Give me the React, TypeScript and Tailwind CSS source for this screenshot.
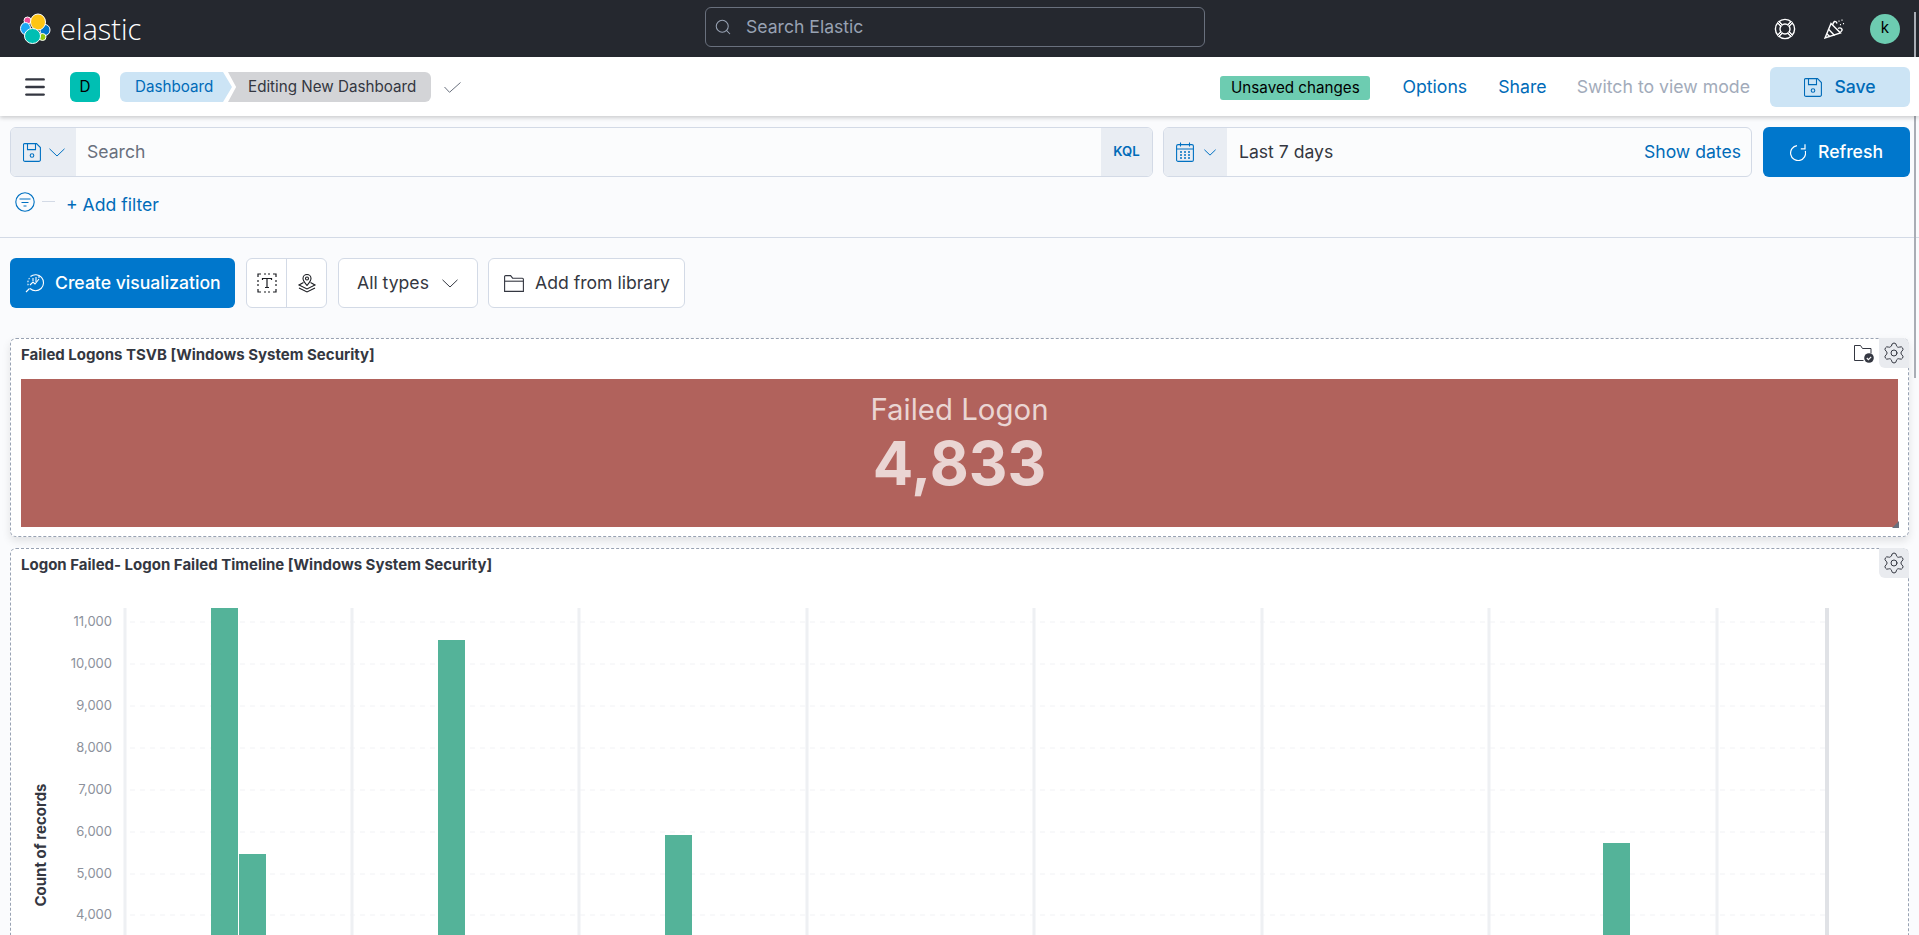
import React from 'react';
import { Menu, Search, Settings } from 'lucide-react';

const yTicks = [
  { label: '11,000', y: 622 },
  { label: '10,000', y: 664 },
  { label: '9,000', y: 706 },
  { label: '8,000', y: 748 },
  { label: '7,000', y: 790 },
  { label: '6,000', y: 832 },
  { label: '5,000', y: 874 },
  { label: '4,000', y: 915 },
];

const gridX = [352, 579, 807, 1034, 1262, 1489, 1717];

const bars = [
  { x: 211, w: 27, top: 608 },
  { x: 239, w: 27, top: 854 },
  { x: 438, w: 27, top: 640 },
  { x: 665, w: 27, top: 835 },
  { x: 1603, w: 27, top: 843 },
];

function ElasticLogo() {
  return (
    <svg width="32" height="32" viewBox="19 11 32 32" className="shrink-0">
      <g stroke="#fff" strokeWidth="1">
        <circle cx="27.5" cy="18.5" r="3.5" fill="#f04e98" />
        <ellipse cx="25.5" cy="26.5" rx="5" ry="6" fill="#1ba9f5" />
        <ellipse cx="45" cy="28" rx="5" ry="5.5" fill="#0077cc" />
        <circle cx="42.5" cy="35" r="3.5" fill="#93c90e" />
        <ellipse cx="38" cy="20" rx="7.5" ry="8" fill="#fec514" />
        <ellipse cx="32.5" cy="34" rx="8" ry="7.5" fill="#00bfb3" />
      </g>
    </svg>
  );
}

function HelpIcon() {
  return (
    <svg width="22" height="22" viewBox="0 0 22 22" fill="none" stroke="#fff" strokeWidth="1.4">
      <circle cx="11" cy="11" r="9.6" />
      <circle cx="11" cy="11" r="5" />
      <path d="M4.2 4.2l3.3 3.3M17.8 4.2l-3.3 3.3M4.2 17.8l3.3-3.3M17.8 17.8l-3.3-3.3" strokeWidth="3.2" />
      <path d="M4.2 4.2l3.3 3.3M17.8 4.2l-3.3 3.3M4.2 17.8l3.3-3.3M17.8 17.8l-3.3-3.3" stroke="#25282f" strokeWidth="0.9" />
    </svg>
  );
}

function CheerIcon() {
  return (
    <svg width="22" height="22" viewBox="0 0 22 22" fill="none" stroke="#fff" strokeWidth="1.4">
      <path d="M1 20L7 5.5l9.5 9.5z" />
      <path d="M4.8 11.5l5.8 6M2.8 15.8l3.2 3" />
      <path d="M8.5 7c.5-1.5 1-3 2-3.5s2 .5 2.5 2M14 10.5c1.5-1 3-.5 3.8.5s0 2-1.3 3" />
      <path d="M15 2.5v1.2M18 1.5v1.2M19.5 5v1.2M16.5 6v1.2" strokeWidth="1.1" />
    </svg>
  );
}

function SaveIcon({ stroke }: { stroke: string }) {
  return (
    <svg width="18" height="19" viewBox="0 0 18 19" fill="none" stroke={stroke} strokeWidth="1.1">
      <path d="M1.5.6h12l3.9 3.9v12.4a1.5 1.5 0 0 1-1.5 1.5H2a1.5 1.5 0 0 1-1.5-1.5V1.6a1 1 0 0 1 1-1z" />
      <path d="M4.5.6v6h8v-6" />
      <circle cx="9" cy="12.5" r="1.8" />
    </svg>
  );
}

function Chevron({ size, stroke }: { size: number; stroke: string }) {
  return (
    <svg width={size} height={size / 2 + 1} viewBox="0 0 16 9" fill="none" stroke={stroke} strokeWidth={16 / size}>
      <path d="M.5.8L8 8l7.5-7.2" />
    </svg>
  );
}

function CalendarIcon() {
  return (
    <svg width="18" height="20" viewBox="0 0 18 20" fill="none" stroke="#0071c2" strokeWidth="1.1">
      <rect x="0.6" y="2.6" width="16.8" height="16.8" rx="1.5" />
      <path d="M.6 7h16.8M4.5.5v4M13.5.5v4" />
      <path d="M4 10h2M8 10h2M12 10h2M4 13h2M8 13h2M12 13h2M4 16h2M8 16h2M12 16h2" strokeWidth="1.6" />
    </svg>
  );
}

function RefreshIcon() {
  return (
    <svg width="16" height="17" viewBox="0 0 16 17" fill="none" stroke="#fff" strokeWidth="1.2">
      <path d="M7 1.6A7.5 7.5 0 1 0 15.3 7" />
      <path d="M15 .3v4.5h-4.2" />
    </svg>
  );
}

function FolderIcon() {
  return (
    <svg width="20" height="17" viewBox="0 0 20 17" fill="none" stroke="#343741" strokeWidth="1.1">
      <path d="M.6 16.4V1.6a1 1 0 0 1 1-1h5l2 2.6h9.8a1 1 0 0 1 1 1v12.2z" />
      <path d="M.6 6.2h18.8" />
    </svg>
  );
}

function CheckMark() {
  return (
    <svg width="17" height="11" viewBox="0 0 17 11" fill="none" stroke="#69707d" strokeWidth="1">
      <path d="M.5 5l5 5.3L16.5.5" />
    </svg>
  );
}

function FilterIcon() {
  return (
    <svg width="20" height="20" viewBox="0 0 20 20" fill="none" stroke="#0071c2" strokeWidth="1.1">
      <circle cx="10" cy="10" r="9.2" />
      <path d="M4.5 7h11M6.5 10.5h7M8.5 14h3" />
    </svg>
  );
}

function CreateVisIcon() {
  return (
    <svg width="20" height="20" viewBox="0 0 20 20" fill="none" stroke="#fff" strokeWidth="1.1">
      <path d="M5.5 3.5A8 8 0 1 1 5 15.5" />
      <path d="M4.5 5A8 8 0 0 0 3.5 13" strokeDasharray="1.5 1.5" />
      <path d="M1 19l3.5-3.5M5 12l3-3 2 2 4-5" />
      <path d="M8 5v3M11 4v5M14 3v2" />
    </svg>
  );
}

function TextBoxIcon() {
  return (
    <svg width="20" height="20" viewBox="0 0 20 20" fill="none" stroke="#1a1c21" strokeWidth="1.2">
      <path d="M1 4V1h3M7 1h2M11 1h2M16 1h3v3M19 7v2M19 11v2M19 16v3h-3M13 19h-2M9 19H7M4 19H1v-3M1 13v-2M1 9V7" />
      <path d="M5.5 7V5.5h9V7M10 5.5v9M8 14.5h4" />
    </svg>
  );
}

function MapLayersIcon() {
  return (
    <svg width="20" height="20" viewBox="0 0 20 20" fill="none" stroke="#1a1c21" strokeWidth="1.1">
      <path d="M10 12.5C7.5 9.5 6 7.8 6 5.5a4 4 0 0 1 8 0c0 2.3-1.5 4-4 7z" />
      <circle cx="10" cy="5.5" r="1.5" />
      <path d="M6.5 9.5L2 12l8 4 8-4-4.5-2.5" />
      <path d="M2 15l8 4 8-4" />
    </svg>
  );
}

function FolderCheckIcon() {
  return (
    <svg width="20" height="18" viewBox="0 0 20 18" fill="none">
      <path d="M.5 15.5V.5h6l2 3h8.5v5M.5 15.5h9" stroke="#343741" strokeWidth="1" />
      <circle cx="15" cy="13" r="4.8" fill="#343741" />
      <path d="M12.8 13l1.6 1.6 2.8-2.8" stroke="#fff" strokeWidth="1.1" />
    </svg>
  );
}

function GearButton() {
  return (
    <div className="absolute top-[-1px] right-[-1px] w-[30px] h-[30px] flex items-center justify-center bg-[#e9ebef] rounded-tr-md rounded-bl-md">
      <Settings className="w-[24px] h-[24px] text-[#343741]" strokeWidth={1} />
    </div>
  );
}

function NavBar() {
  return (
    <div className="relative z-10 h-[59px] pt-[1px] bg-white shadow-[0_2px_4px_rgba(0,0,0,0.18)] flex items-center">
      <Menu className="ml-[22px] w-[26px] h-[26px] text-[#343741]" strokeWidth={2.2} />
      <div className="ml-[22px] w-[30px] h-[30px] rounded-md bg-[#00bfb3] flex items-center justify-center text-[15.2px] text-black">D</div>
      <div className="ml-[20px] flex items-center h-[30px] text-[15.2px]">
        <div className="w-[112px] h-[30px] pl-[15px] flex items-center rounded-l-md bg-[#cce4f5] text-[#006bb8] [clip-path:polygon(0_0,92%_0,100%_50%,92%_100%,0_100%)]">
          Dashboard
        </div>
        <div className="ml-[-4px] w-[203px] h-[30px] pl-[20px] flex items-center rounded-r-md bg-[#d3d4d7] text-[#343741] [clip-path:polygon(0_0,100%_0,100%_100%,0_100%,4%_50%)]">
          Editing New Dashboard
        </div>
      </div>
      <div className="ml-[13px]"><CheckMark /></div>
      <div className="ml-auto flex items-center">
        <div className="mt-[2px] w-[150px] h-[24px] rounded-[3px] bg-[#6dccb1] text-[15.2px] text-black flex items-center justify-center">Unsaved changes</div>
        <span className="ml-[32px] mt-[1px] text-[17.7px] text-[#006bb8]">Options</span>
        <span className="ml-[31px] mt-[1px] text-[17.7px] text-[#006bb8]">Share</span>
        <span className="ml-[30px] mt-[1px] text-[17.7px] text-[#a2abba]">Switch to view mode</span>
        <div className="ml-[20px] mr-[9px] w-[140px] h-[40px] rounded-md bg-[#cce4f5] text-[#006bb8] flex items-center justify-center gap-[12px] text-[17.6px] font-medium">
          <SaveIcon stroke="#006bb8" />
          <span className="mt-[1px]">Save</span>
        </div>
      </div>
    </div>
  );
}

export default function App() {
  return (
    <div className="relative w-[1919px] h-[935px] overflow-hidden bg-[#fafbfd] font-['Inter',sans-serif]">
      <div className="relative h-[57px] bg-[#25282f] flex items-center">
        <div className="ml-[19px] flex items-center gap-[9px]">
          <ElasticLogo />
          <span className="text-[29px] font-light text-white font-['Open_Sans',sans-serif] leading-none">elastic</span>
        </div>
        <div className="absolute left-[705px] top-[7px] w-[500px] h-[40px] rounded-md border border-[#69707d] flex items-center pl-[8px] gap-[14px] text-[17.6px] text-[#98a2b3]">
          <Search className="w-[18px] h-[18px] text-[#98a2b3]" strokeWidth={1.4} />
          Search Elastic
        </div>
        <div className="ml-auto flex items-center">
          <HelpIcon />
          <div className="ml-[28px]"><CheerIcon /></div>
          <div className="ml-[24px] mr-[19px] w-[30px] h-[30px] rounded-full bg-[#6dccb1] flex items-center justify-center text-[15.2px] text-black">k</div>
        </div>
      </div>

      <NavBar />

      <div className="mt-[11px] px-[10px] pr-[9px] flex gap-[11px] h-[50px]">
        <div className="flex-1 flex rounded-md border border-[#d3dae6] overflow-hidden bg-[#fbfcfd]">
          <div className="w-[65px] bg-[#e9edf3] flex items-center justify-center gap-[8px]">
            <SaveIcon stroke="#0071c2" />
            <Chevron size={16} stroke="#0071c2" />
          </div>
          <div className="flex-1 pl-[11px] flex items-center text-[17.6px] text-[#69707d]">Search</div>
          <div className="w-[51px] bg-[#e9edf3] flex items-center justify-center text-[13.2px] font-semibold text-[#006bb8]">KQL</div>
        </div>
        <div className="ml-[-1px] w-[589px] flex rounded-md border border-[#d3dae6] overflow-hidden bg-[#fbfcfd]">
          <div className="w-[63px] bg-[#e9edf3] flex items-center justify-center gap-[10px]">
            <CalendarIcon />
            <Chevron size={12} stroke="#0071c2" />
          </div>
          <div className="flex-1 pl-[12px] pr-[10px] flex items-center justify-between text-[17.6px]">
            <span className="text-[#343741]">Last 7 days</span>
            <span className="text-[#006bb8]">Show dates</span>
          </div>
        </div>
        <div className="w-[147px] rounded-md bg-[#0077cc] text-white flex items-center justify-center gap-[12px] text-[17.6px] font-medium">
          <RefreshIcon />
          Refresh
        </div>
      </div>

      <div className="h-[61px] border-b border-[#d3dae6] flex items-start">
        <div className="ml-[15px] mt-[15px]"><FilterIcon /></div>
        <div className="ml-[7px] mt-[24px] w-[13px] h-[1px] bg-[#d3dae6]" />
        <span className="ml-[11px] mt-[15px] text-[17.6px] text-[#006bb8]">+ Add filter</span>
      </div>

      <div className="mt-[20px] ml-[10px] flex items-stretch h-[50px]">
        <div className="w-[225px] rounded-md bg-[#0077cc] text-white flex items-center pl-[15px] gap-[10px] text-[17.6px] font-medium">
          <CreateVisIcon />
          <span className="mt-[1px]">Create visualization</span>
        </div>
        <div className="ml-[11px] w-[81px] flex rounded-md border border-[#d3dae6] bg-white overflow-hidden">
          <div className="w-[40px] flex items-center justify-center border-r border-[#d3dae6]"><TextBoxIcon /></div>
          <div className="flex-1 flex items-center justify-center"><MapLayersIcon /></div>
        </div>
        <div className="ml-[11px] w-[140px] rounded-md border border-[#d3dae6] bg-white flex items-center pl-[18px] gap-[13px] text-[17.6px] text-[#343741]">
          <span className="mt-[1px]">All types</span>
          <Chevron size={16} stroke="#343741" />
        </div>
        <div className="ml-[10px] w-[197px] rounded-md border border-[#d3dae6] bg-white flex items-center pl-[15px] gap-[11px] text-[17.6px] text-[#343741]">
          <FolderIcon />
          <span className="mt-[1px]">Add from library</span>
        </div>
      </div>

      <div className="relative mt-[30px] mx-[10px] h-[199px] bg-white rounded-md border border-dashed border-[#98a2b3] shadow-[0_4px_8px_rgba(0,0,0,0.1)]">
        <div className="h-[40px] pl-[10px] pt-[5px] text-[15px] font-bold text-[#343741]">Failed Logons TSVB [Windows System Security]</div>
        <div className="absolute top-[6px] right-[34px]"><FolderCheckIcon /></div>
        <GearButton />
        <div className="relative mx-[10px] h-[148px] pb-[14px] bg-[#b1625c] flex flex-col items-center justify-center text-[#ead5d3]">
          <div className="text-[29.4px] leading-[34px]">Failed Logon</div>
          <div className="text-[60px] leading-[72px] font-bold">4,833</div>
          <div className="absolute bottom-[-1px] right-[-1px] w-[7px] h-[7px] bg-[#69707d] [clip-path:polygon(100%_0,100%_100%,0_100%)]" />
        </div>
      </div>

      <div className="relative mt-[11px] mx-[10px] h-[420px] bg-white rounded-md border border-dashed border-[#98a2b3]">
        <div className="h-[48px] pl-[10px] pt-[5px] text-[15px] font-bold text-[#343741]">Logon Failed- Logon Failed Timeline [Windows System Security]</div>
        <GearButton />
        <svg width="1897" height="340" viewBox="11 597 1897 340" className="block">
          {yTicks.map((t) => (
            <g key={t.label}>
              <line x1="130" x2="1827" y1={t.y} y2={t.y} stroke="#f1f2f5" strokeWidth="1" strokeDasharray="5 5" />
              <text x="112" y={t.y + 4} textAnchor="end" fontSize="13" fill="#8c919c">{t.label}</text>
            </g>
          ))}
          <line x1="125" x2="125" y1="608" y2="940" stroke="#eef0f3" strokeWidth="3" />
          {gridX.map((x) => (
            <line key={x} x1={x} x2={x} y1="608" y2="940" stroke="#eef0f3" strokeWidth="3" />
          ))}
          <line x1="1827" x2="1827" y1="608" y2="940" stroke="#e0e2e6" strokeWidth="4" />
          {bars.map((b) => (
            <rect key={b.x} x={b.x} y={b.top} width={b.w} height={940 - b.top} fill="#54b399" />
          ))}
          <text x="0" y="0" transform="translate(46 845) rotate(-90)" textAnchor="middle" fontSize="15" fontWeight="700" fill="#343741">Count of records</text>
        </svg>
      </div>

      <div className="absolute right-[3px] top-[12px] w-[2px] h-[366px] bg-[#a9adb5]" />
    </div>
  );
}
